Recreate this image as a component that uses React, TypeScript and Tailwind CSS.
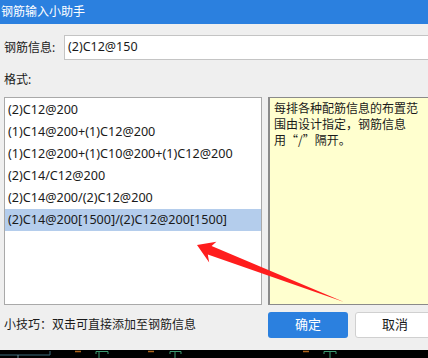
import React from 'react';

const formats = [
  '(2)C12@200',
  '(1)C14@200+(1)C12@200',
  '(1)C12@200+(1)C10@200+(1)C12@200',
  '(2)C14/C12@200',
  '(2)C14@200/(2)C12@200',
  '(2)C14@200[1500]/(2)C12@200[1500]',
];

const font = { fontFamily: '"Noto Sans", "Noto Sans CJK SC", sans-serif' };

export default function App() {
  const selected = 5;
  return (
    <div className="relative w-[428px] h-[358px] overflow-hidden bg-[#efefef] text-[12px] text-[#1a1a1a]" style={font}>
      {/* title bar */}
      <div className="h-[24px] bg-[#2b80df] text-white flex items-center pl-[1px] leading-none">钢筋输入小助手</div>

      <div className="h-[326px] flex flex-col px-[4px]">
        <div className="mt-[11px] flex items-center h-[25px]">
          <span className="w-[60px] shrink-0">钢筋信息:</span>
          <div className="h-[25px] w-[420px] shrink-0 bg-white border border-[#c4c4c4] flex items-center pl-[3px] text-[12.5px]">
            (2)C12@150
          </div>
        </div>

        <div className="mt-[12px] h-[16px] leading-[16px]">格式:</div>

        <div className="mt-[9px] flex gap-[6px] h-[208px]">
          <div className="w-[258px] shrink-0 bg-white border border-[#a9a9a9] pt-[1px] text-[12.6px]">
            {formats.map((f, i) => (
              <div
                key={f}
                className={`h-[22px] flex items-center pl-[3px] whitespace-nowrap ${i === selected ? 'bg-[#b4cdec] h-[21px]' : ''}`}
              >
                {f}
              </div>
            ))}
          </div>
          <div className="w-[200px] shrink-0 bg-[#ffffcf] border-l-2 border-t border-b border-[#8a8a8a] pt-[2px] pl-[4px]">
            <p className="w-[150px] leading-[16px]" style={{ fontFamily: '"Noto Sans CJK SC", sans-serif' }}>
              每排各种配筋信息的布置范围由设计指定，钢筋信息用“/”隔开。
            </p>
          </div>
        </div>

        <div className="mt-[7px] flex items-center h-[26px]">
          <span className="w-[264px] shrink-0">小技巧：双击可直接添加至钢筋信息</span>
          <button className="w-[80px] h-[26px] shrink-0 rounded-[3px] bg-[#2b80df] text-white text-[13px]">确定</button>
          <button className="ml-[7px] w-[80px] h-[26px] shrink-0 rounded-[3px] bg-white border border-[#d0d0d0] text-[13px]">取消</button>
        </div>
      </div>

      {/* background CAD drawing strip */}
      <svg className="block" width="428" height="8" viewBox="0 0 428 8">
        <rect width="428" height="8" fill="#000" />
        <path d="M0 5 H50 V1" stroke="#3d6b7a" fill="none" strokeWidth="1" />
        <path d="M18 5 V8" stroke="#6f8f99" strokeWidth="1" />
        <path d="M75 1.5 H81 M148 1.5 H154 M303 1.5 H309" stroke="#b0641c" strokeWidth="1.5" />
        <path d="M96 4 V1.5 H108 V4 M99 1.5 V8 M170 4 V1.5 H181 V4 M175 1.5 V8 M324 4 V1.5 H336 V4 M330 1.5 V8" stroke="#3f9a72" fill="none" strokeWidth="1" />
      </svg>

      {/* red annotation arrow */}
      <svg className="absolute left-0 top-0 pointer-events-none" width="428" height="358">
        <polygon
          points="197,245 216.4,241.8 211.6,246 344,302 207.8,254.6 209.2,262.4"
          fill="#ff1d1d"
        />
      </svg>
    </div>
  );
}
